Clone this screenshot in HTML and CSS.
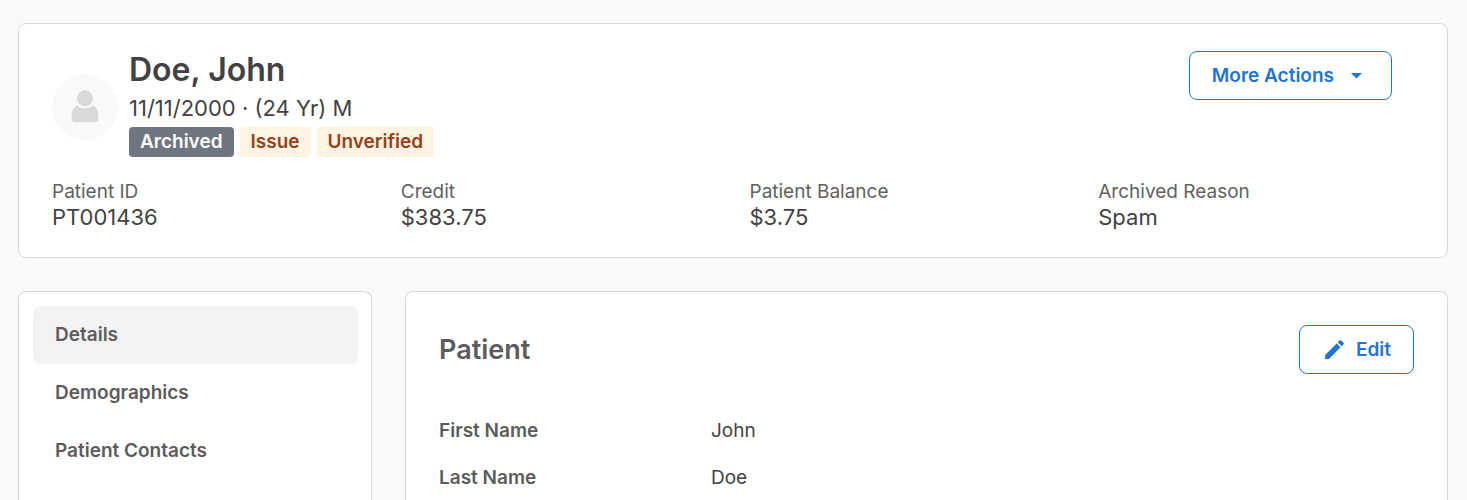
FILE: index.html
```html
<!DOCTYPE html>
<html lang="en">
<head>
    <meta charset="UTF-8">
    <meta name="viewport" content="width=device-width, initial-scale=1.0">
    <title>Patient Details</title>
    <link rel="stylesheet" href="styles.css">
</head>
<body>
    <header class="card patient-header">
        <div class="patient-top">
            <div class="avatar">
                <svg width="28" height="34" viewBox="0 0 28 34" aria-hidden="true">
                    <path d="M6 15.500C2.500 16.500 .7 21 .7 26v3c0 2.200 1.200 3.200 3.200 3.200h20.200c2 0 3.200-1 3.200-3.200v-3c0-5-1.800-9.500-5.300-10.500A10.500 10.500 0 0 1 14 18.200a10.500 10.500 0 0 1-8-2.700z"/>
                    <circle cx="14" cy="8.300" r="8"/>
                </svg>
            </div>
            <div class="patient-info">
                <h1>Doe, John</h1>
                <p class="patient-meta">11/11/2000 · (24 Yr) M</p>
                <div class="badges">
                    <span class="badge badge-archived">Archived</span>
                    <span class="badge badge-warning">Issue</span>
                    <span class="badge badge-warning">Unverified</span>
                </div>
            </div>
            <button type="button" class="btn btn-actions">
                More Actions
                <svg width="11" height="6" viewBox="0 0 11 6" aria-hidden="true"><path d="M0 0h11L5.500 5.500z"/></svg>
            </button>
        </div>
        <dl class="summary">
            <div>
                <dt>Patient ID</dt>
                <dd>PT001436</dd>
            </div>
            <div>
                <dt>Credit</dt>
                <dd>$383.75</dd>
            </div>
            <div>
                <dt>Patient Balance</dt>
                <dd>$3.75</dd>
            </div>
            <div>
                <dt>Archived Reason</dt>
                <dd>Spam</dd>
            </div>
        </dl>
    </header>

    <div class="content">
        <nav class="card sidebar">
            <a href="#details" class="active">Details</a>
            <a href="#demographics">Demographics</a>
            <a href="#contacts">Patient Contacts</a>
        </nav>

        <main class="card details" id="details">
            <div class="details-head">
                <h2>Patient</h2>
                <button type="button" class="btn">
                    <svg width="25" height="25" viewBox="0 0 24 24" aria-hidden="true"><path d="M3 17.250V21h3.750L17.810 9.940l-3.750-3.750L3 17.250zM20.710 7.040a1 1 0 0 0 0-1.410l-2.340-2.340a1 1 0 0 0-1.410 0l-1.830 1.830 3.750 3.750 1.830-1.830z"/></svg>
                    Edit
                </button>
            </div>
            <dl class="fields">
                <dt>First Name</dt>
                <dd>John</dd>
                <dt>Last Name</dt>
                <dd>Doe</dd>
            </dl>
        </main>
    </div>
</body>
</html>
```

FILE: styles.css
```css
* {
    box-sizing: border-box;
}
html, body {
    height: 100%;
}
body {
    display: flex;
    flex-direction: column;
    gap: 33px;
    margin: 0;
    padding: 23px 19px 0 18px;
    background-color: #f9f9f9;
    color: #424242;
    font-family: Inter, "Liberation Sans", sans-serif;
    font-size: 19px;
    line-height: 26px;
    overflow: hidden;
}
h1, h2, p, dl, dd {
    margin: 0;
}
.card {
    background-color: #ffffff;
    border: 1px solid #d9d9d9;
    border-radius: 8px;
}

/* Patient header */
.patient-header {
    padding: 27px 32px 28px 33px;
}
.patient-top {
    display: flex;
    align-items: flex-start;
}
.avatar {
    display: flex;
    align-items: center;
    justify-content: center;
    width: 66px;
    height: 66px;
    margin-right: 11px;
    border-radius: 50%;
    background-color: #f9f9f9;
    fill: #d9d9d9;
    align-self: center;
}
.patient-info {
    flex: 1;
    padding-bottom: 6px;
}
h1 {
    font-size: 32px;
    font-weight: 600;
    line-height: 38px;
}
.patient-meta {
    font-size: 22px;
    line-height: 38px;
}
.badges {
    display: flex;
    gap: 6px;
}
.badge {
    padding: 0 11px;
    border-radius: 4px;
    font-weight: 600;
    line-height: 30px;
}
.badge-archived {
    background-color: #6e7681;
    color: #ffffff;
}
.badge-warning {
    background-color: #fff4e3;
    color: #964219;
}
.btn {
    display: flex;
    align-items: center;
    gap: 9px;
    height: 49px;
    padding: 0 22px;
    border: 1px solid #1f76d2;
    border-radius: 8px;
    background-color: #ffffff;
    color: #1f76d2;
    fill: #1f76d2;
    font-family: inherit;
    font-size: 19px;
    font-weight: 600;
    cursor: pointer;
}
.btn-actions {
    gap: 17px;
    padding-right: 29px;
    margin-right: 23px;
}
.summary {
    display: grid;
    grid-template-columns: repeat(4, 1fr);
    gap: 32px;
    padding-top: 16px;
}
.summary dt {
    color: #616161;
}
.summary dd {
    font-size: 22px;
    line-height: 24px;
}

/* Sidebar and details */
.content {
    display: flex;
    flex: 1;
    gap: 33px;
}
.content .card {
    border-bottom: 0;
    border-radius: 8px 8px 0 0;
}
.sidebar {
    width: 354px;
    padding: 14px 13px 14px 14px;
}
.sidebar a {
    display: block;
    padding: 16px 22px;
    border-radius: 8px;
    color: #5c5c5c;
    font-weight: 600;
    text-decoration: none;
}
.sidebar .active {
    background-color: #f3f3f3;
}
.details {
    flex: 1;
    padding: 33px;
}
.details-head {
    display: flex;
    align-items: center;
    justify-content: space-between;
    padding-bottom: 44px;
}
h2 {
    color: #5c5c5c;
    font-size: 27px;
    font-weight: 600;
}
.fields {
    display: grid;
    grid-template-columns: 272px 1fr;
    row-gap: 21px;
}
.fields dt {
    color: #5c5c5c;
    font-weight: 600;
}
```
